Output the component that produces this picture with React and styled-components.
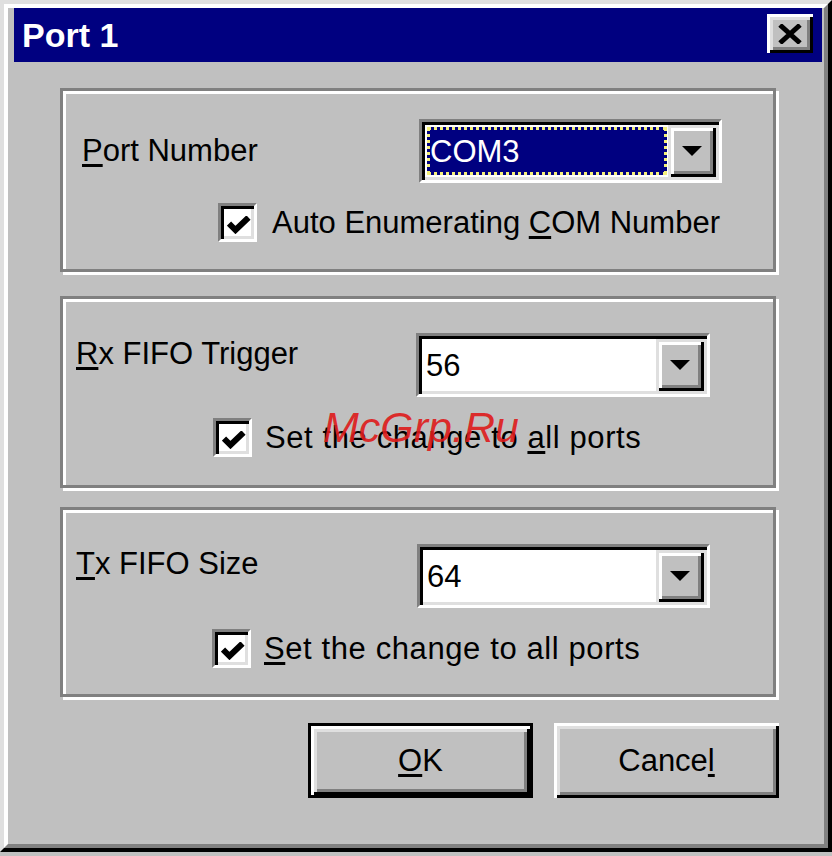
import React from "react";
import styled, { createGlobalStyle } from "styled-components";

const GlobalStyle = createGlobalStyle`
    html, body {
        margin: 0;
        padding: 0;
        background: #c0c0c0;
    }
    body {
        font-family: "Liberation Sans", Arial, sans-serif;
    }
`;

const Window = styled.div`
    position: relative;
    width: 832px;
    height: 852px;
    box-sizing: border-box;
    background: #c0c0c0;
    border: 4px solid;
    border-color: #dfdfdf #000 #000 #dfdfdf;
`;

const Frame = styled.div`
    height: 100%;
    box-sizing: border-box;
    border: 4px solid;
    border-color: #fff #808080 #808080 #fff;
    padding: 0 2px 0 6px;
    display: flex;
    flex-direction: column;
`;

const TitleBar = styled.div`
    height: 54px;
    flex-shrink: 0;
    background: #000080;
    display: flex;
    align-items: flex-start;
    justify-content: space-between;
    padding: 6px 9px 0 8px;
    box-sizing: border-box;

    .title {
        margin-top: 1px;
        color: #fff;
        font-weight: bold;
        font-size: 34px;
        line-height: 40px;
    }
`;

const raised = `
    background: #c0c0c0;
    box-shadow: inset 3px 3px 0 #fff, inset -3px -3px 0 #000,
        inset 6px 6px 0 #dfdfdf, inset -6px -6px 0 #808080;
`;

const CloseButton = styled.div`
    width: 46px;
    height: 39px;
    ${raised}
    display: flex;
    align-items: center;
    justify-content: center;
`;

const Body = styled.div`
    flex: 1;
    padding: 26px 46px 0 46px;
    display: flex;
    flex-direction: column;
`;

const Group = styled.div`
    height: ${(p) => p.$h}px;
    margin-top: ${(p) => p.$top}px;
    box-sizing: border-box;
    border: 3px solid #808080;
    box-shadow: inset 3px 3px 0 #fff, 3px 3px 0 #fff;
    padding: ${(p) => p.$pad}px 0 0 0;
    display: flex;
    flex-direction: column;
    font-size: 31px;
    color: #000;
`;

const FieldRow = styled.div`
    display: flex;
    align-items: flex-start;
    padding-left: ${(p) => p.$left}px;
`;

const Label = styled.div`
    width: ${(p) => p.$w}px;
    margin-top: ${(p) => p.$top}px;
    line-height: 36px;
`;

const Key = styled.span`
    text-decoration: underline;
    text-decoration-thickness: 3px;
    text-underline-offset: 3px;
`;

const Combo = styled.div`
    width: ${(p) => p.$w}px;
    height: 64px;
    box-sizing: border-box;
    border: 3px solid;
    border-color: #808080 #fff #fff #808080;
    box-shadow: inset 3px 3px 0 #000, inset -3px -3px 0 #dfdfdf;
    background: #fff;
    padding: 3px;
    display: flex;
`;

const ComboValue = styled.div`
    flex: 1;
    display: flex;
    align-items: center;
    line-height: 36px;
    padding-left: 4px;
    padding-top: 2px;

    &.selected {
        margin: 2px 1px 2px 2px;
        padding-left: 0;
        border: 3px dotted #f4f07a;
        background: #000080;
        color: #fff;
    }
`;

const DropButton = styled.div`
    width: 48px;
    background: #c0c0c0;
    box-shadow: inset 3px 3px 0 #dfdfdf, inset -3px -3px 0 #000,
        inset 6px 6px 0 #fff, inset -6px -6px 0 #808080;
    display: flex;
    align-items: center;
    justify-content: center;
`;

const CheckRow = styled.div`
    display: flex;
    align-items: center;
    gap: ${(p) => p.$gap}px;
    margin-top: ${(p) => p.$top}px;
    padding-left: ${(p) => p.$left}px;
    line-height: 36px;
    letter-spacing: ${(p) => p.$spacing || 0}px;
`;

const CheckBox = styled.div`
    width: 39px;
    height: 39px;
    flex-shrink: 0;
    box-sizing: border-box;
    border: 3px solid;
    border-color: #808080 #fff #fff #808080;
    box-shadow: inset 3px 3px 0 #000, inset -3px -3px 0 #dfdfdf;
    background: #fff;
    display: flex;
    align-items: flex-start;

    svg {
        margin: 10px 0 0 6px;
    }
`;

const ButtonRow = styled.div`
    display: flex;
    justify-content: flex-end;
    gap: 21px;
    margin: 26px -3px 0 0;
`;

const PushButton = styled.div`
    width: 225px;
    height: 75px;
    box-sizing: border-box;
    ${raised}
    display: flex;
    align-items: center;
    justify-content: center;
    font-size: 31px;
    line-height: 36px;
    color: #000;

    &.default {
        border: 3px solid #000;
    }
`;

const Watermark = styled.div`
    position: absolute;
    left: 319px;
    top: 403px;
    font-size: 43px;
    line-height: 41px;
    font-style: italic;
    color: rgba(222, 28, 28, 0.92);
    pointer-events: none;
`;

const Arrow = () => (
    <svg width="20" height="10" viewBox="0 0 20 10">
        <polygon points="0,0 20,0 10,10" fill="#000" />
    </svg>
);

const Check = () => (
    <svg width="24" height="18" viewBox="0 0 24 18">
        <path d="M2 7.5 L8.5 14 L21.5 1.5" fill="none" stroke="#000" strokeWidth="6" />
    </svg>
);

const FieldCombo = ({ width, value, selected }) => (
    <Combo $w={width}>
        <ComboValue className={selected ? "selected" : ""}>{value}</ComboValue>
        <DropButton>
            <Arrow />
        </DropButton>
    </Combo>
);

const App = () => {
    return (
        <>
            <GlobalStyle />
            <Window>
                <Frame>
                    <TitleBar>
                        <span className="title">Port 1</span>
                        <CloseButton>
                            <svg width="24" height="20" viewBox="0 0 24 20">
                                <path d="M2 1 L22 19 M22 1 L2 19" stroke="#000" strokeWidth="5" />
                            </svg>
                        </CloseButton>
                    </TitleBar>
                    <Body>
                        <Group $h={184} $top={0} $pad={28}>
                            <FieldRow $left={19}>
                                <Label $w={337} $top={14}>
                                    <Key>P</Key>ort Number
                                </Label>
                                <FieldCombo width={303} value="COM3" selected />
                            </FieldRow>
                            <CheckRow $top={20} $left={155} $gap={15}>
                                <CheckBox>
                                    <Check />
                                </CheckBox>
                                <span>
                                    Auto Enumerating <Key>C</Key>OM Number
                                </span>
                            </CheckRow>
                        </Group>

                        <Group $h={192} $top={24} $pad={34}>
                            <FieldRow $left={13}>
                                <Label $w={340} $top={3}>
                                    <Key>R</Key>x FIFO Trigger
                                </Label>
                                <FieldCombo width={294} value="56" />
                            </FieldRow>
                            <CheckRow $top={21} $left={150} $gap={13} $spacing={0.6}>
                                <CheckBox>
                                    <Check />
                                </CheckBox>
                                <span>
                                    Set the change to <Key>a</Key>ll ports
                                </span>
                            </CheckRow>
                        </Group>

                        <Group $h={190} $top={19} $pad={34}>
                            <FieldRow $left={13}>
                                <Label $w={341} $top={2}>
                                    <Key>T</Key>x FIFO Size
                                </Label>
                                <FieldCombo width={293} value="64" />
                            </FieldRow>
                            <CheckRow $top={21} $left={149} $gap={13} $spacing={0.6}>
                                <CheckBox>
                                    <Check />
                                </CheckBox>
                                <span>
                                    <Key>S</Key>et the change to all ports
                                </span>
                            </CheckRow>
                        </Group>

                        <ButtonRow>
                            <PushButton className="default">
                                <span>
                                    <Key>O</Key>K
                                </span>
                            </PushButton>
                            <PushButton>
                                <span>
                                    Cance<Key>l</Key>
                                </span>
                            </PushButton>
                        </ButtonRow>
                    </Body>
                </Frame>
                <Watermark>McGrp.Ru</Watermark>
            </Window>
        </>
    );
};

export default App;
